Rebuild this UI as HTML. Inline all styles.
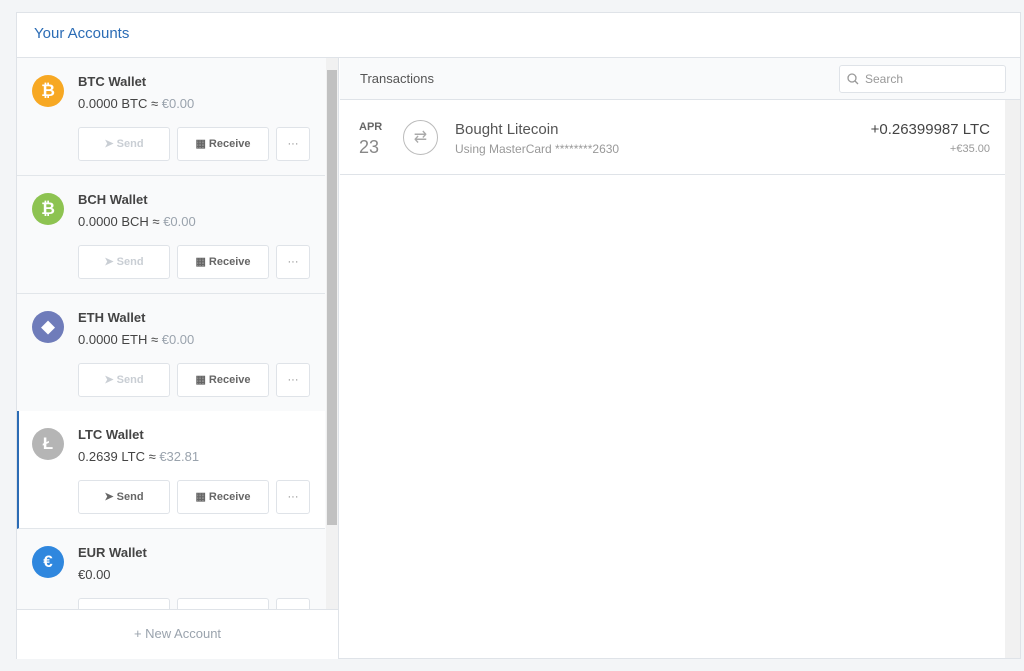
<!DOCTYPE html>
<html><head><style>
*{box-sizing:border-box;margin:0;padding:0}
body{width:1024px;height:671px;background:#f3f5f7;font-family:"Liberation Sans",sans-serif;position:relative;overflow:hidden}
.card{position:absolute;left:16px;top:12px;width:1005px;height:647px;background:#fff;border:1px solid #dfe3e8}
.hdr{height:45px;border-bottom:1px solid #dfe3e8;padding:12px 0 0 17px;color:#2b6cb5;font-size:15px}
.left{position:absolute;left:0;top:45px;width:322px;height:551px;border-right:1px solid #dfe3e8;overflow:hidden;background:#f9fafb}
.w{position:absolute;left:0;width:308px;height:118px;border-bottom:1px solid #e2e6ea;background:#f9fafb}
.w.sel{background:#fff;border-left:2px solid #2b6cb5}
.ic{position:absolute;left:15px;top:17px;width:32px;height:32px;border-radius:50%;color:#fff;font-weight:bold;font-size:17px;text-align:center;line-height:32px}
.nm{position:absolute;left:61px;top:16px;font-size:13px;font-weight:bold;color:#444}
.bal{position:absolute;left:61px;top:38px;font-size:13px;color:#444}
.bal span{color:#9aa3ad}
.b{position:absolute;top:69px;height:34px;border:1px solid #dfe3e8;border-radius:3px;background:#fff;font-size:11px;font-weight:bold;color:#666;text-align:center;line-height:32px}
.s{left:61px;width:92px;color:#c9ced4}
.r{left:160px;width:92px}
.m{left:259px;width:34px;color:#888;font-weight:normal}
.sb{position:absolute;left:309px;top:0;width:12px;height:551px;background:#f1f1f1}
.th{position:absolute;left:1px;top:12px;width:10px;height:455px;background:#c1c1c1}
.foot{position:absolute;left:0;top:596px;width:322px;height:50px;background:#fff;border-top:1px solid #dfe3e8;border-right:1px solid #dfe3e8;text-align:center;line-height:48px;color:#9aa3ad;font-size:13px}
.right{position:absolute;left:323px;top:45px;right:0;bottom:0}
.th2{height:42px;border-bottom:1px solid #dfe3e8;background:#f9fafb;padding:13px 0 0 20px;font-size:13px;color:#555}
.srch{position:absolute;right:14px;top:7px;width:167px;height:28px;border:1px solid #dfe3e8;border-radius:3px;background:#fff;font-size:12px;color:#999;padding:6px 0 0 25px}
.tx{position:absolute;left:0;top:42px;width:667px;height:75px;border-bottom:1px solid #dfe3e8}
.rsb{position:absolute;right:0;top:42px;width:15px;bottom:0;background:#f1f1f1}
</style></head><body>
<div class="card">
<div class="hdr">Your Accounts</div>
<div class="left">
<div class="w" style="top:0"><div class="ic" style="background:#f7a823">₿</div><div class="nm">BTC Wallet</div><div class="bal">0.0000 BTC ≈ <span>€0.00</span></div><div class="b s">➤ Send</div><div class="b r">▦ Receive</div><div class="b m">···</div></div>
<div class="w" style="top:118px"><div class="ic" style="background:#8dc351">₿</div><div class="nm">BCH Wallet</div><div class="bal">0.0000 BCH ≈ <span>€0.00</span></div><div class="b s">➤ Send</div><div class="b r">▦ Receive</div><div class="b m">···</div></div>
<div class="w" style="top:236px"><div class="ic" style="background:#6f7cba">◆</div><div class="nm">ETH Wallet</div><div class="bal">0.0000 ETH ≈ <span>€0.00</span></div><div class="b s">➤ Send</div><div class="b r">▦ Receive</div><div class="b m">···</div></div>
<div class="w sel" style="top:353px"><div class="ic" style="background:#b5b5b5;left:13px">Ł</div><div class="nm" style="left:59px">LTC Wallet</div><div class="bal" style="left:59px">0.2639 LTC ≈ <span>€32.81</span></div><div class="b s" style="left:59px;color:#666">➤ Send</div><div class="b r" style="left:158px">▦ Receive</div><div class="b m" style="left:257px">···</div></div>
<div class="w" style="top:471px"><div class="ic" style="background:#2f87de">€</div><div class="nm">EUR Wallet</div><div class="bal">€0.00</div><div class="b s"></div><div class="b r"></div><div class="b m"></div></div>
<div class="sb"><div class="th"></div></div>
</div>
<div class="foot">+ New Account</div>
<div class="right">
<div class="th2">Transactions</div>
<div class="srch"><svg style="position:absolute;left:7px;top:7px" width="12" height="12" viewBox="0 0 12 12"><circle cx="5" cy="5" r="4" fill="none" stroke="#999" stroke-width="1.3"/><path d="M8 8l3 3" stroke="#999" stroke-width="1.3"/></svg>Search</div>
<div class="tx">
<div style="position:absolute;left:19px;top:21px;font-size:11px;font-weight:bold;color:#666">APR</div>
<div style="position:absolute;left:19px;top:37px;font-size:18px;color:#888">23</div>
<div style="position:absolute;left:63px;top:20px;width:35px;height:35px;border:1px solid #bbb;border-radius:50%;color:#aaa;text-align:center;line-height:33px;font-size:16px">⇄</div>
<div style="position:absolute;left:115px;top:21px;font-size:15px;color:#555">Bought Litecoin</div>
<div style="position:absolute;left:115px;top:42px;font-size:12px;color:#999">Using MasterCard ********2630</div>
<div style="position:absolute;right:17px;top:21px;font-size:15px;color:#444">+0.26399987 LTC</div>
<div style="position:absolute;right:17px;top:43px;font-size:11px;color:#999">+€35.00</div>
</div>
<div class="rsb"></div>
</div>
</div>
</body></html>
